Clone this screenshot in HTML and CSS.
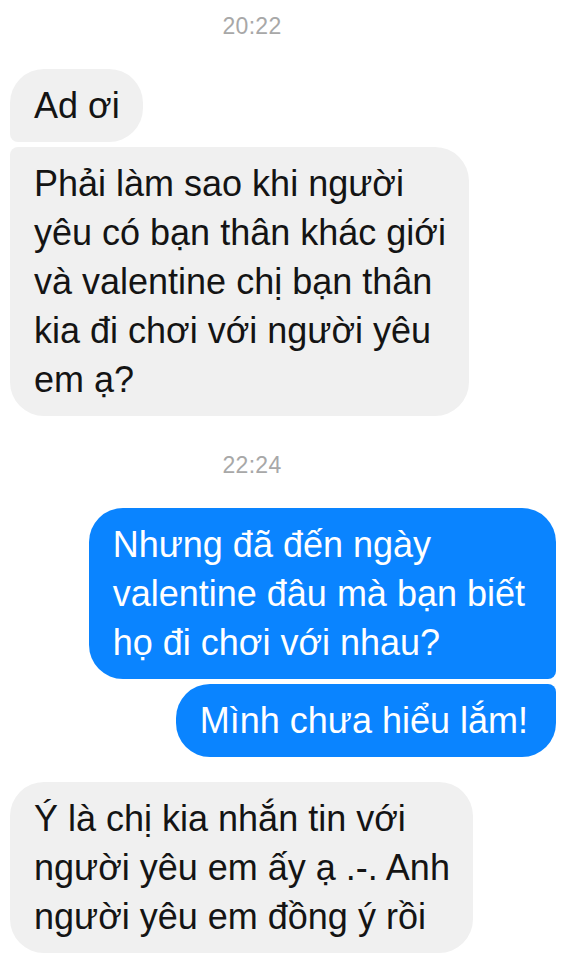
FILE: index.html
```html
<!DOCTYPE html>
<html lang="vi">
<head>
<meta charset="utf-8">
<title>Chat</title>
<link rel="stylesheet" href="styles.css">
</head>
<body>
<div class="chat">
  <div class="time">20:22</div>
  <div class="group in">
    <div class="bubble first">Ad ơi</div>
    <div class="bubble last">Phải làm sao khi người<br>yêu có bạn thân khác giới<br>và valentine chị bạn thân<br>kia đi chơi với người yêu<br>em ạ?</div>
  </div>
  <div class="time time-2">22:24</div>
  <div class="group out">
    <div class="bubble first">Nhưng đã đến ngày<br>valentine đâu mà bạn biết<br>họ đi chơi với nhau?</div>
    <div class="bubble last">Mình chưa hiểu lắm!</div>
  </div>
  <div class="group in group-3">
    <div class="bubble single">Ý là chị kia nhắn tin với<br>người yêu em ấy ạ .-. Anh<br>người yêu em đồng ý rồi</div>
  </div>
</div>
</body>
</html>
```

FILE: styles.css
```css
html, body {
  margin: 0;
  padding: 0;
  background: #ffffff;
}

body {
  font-family: "Liberation Sans", Arial, sans-serif;
  width: 562px;
  height: 960px;
  overflow: hidden;
}

.chat {
  display: flex;
  flex-direction: column;
  padding: 13px 6px 0 10px;
}

.time {
  width: 484px;
  text-align: center;
  font-size: 23px;
  line-height: 26px;
  color: #a8a8a8;
  letter-spacing: 0.3px;
  margin-bottom: 30px;
}

.time-2 {
  margin-top: 36px;
}

.group {
  display: flex;
  flex-direction: column;
  gap: 5px;
}

.group.in {
  align-items: flex-start;
}

.group.out {
  align-items: flex-end;
}

.group-3 {
  margin-top: 25px;
}

.bubble {
  font-size: 36px;
  line-height: 49px;
  padding: 12px 23px 12px 24px;
  border-radius: 34px;
  white-space: nowrap;
}

.in .bubble {
  background: #f0f0f0;
  color: #141414;
}

.out .bubble {
  background: #0a84ff;
  color: #ffffff;
  padding: 12px 28px 12px 24px;
}

.out .first {
  padding-right: 31px;
}

.in .first {
  border-radius: 34px 34px 34px 8px;
}

.in .last {
  border-radius: 8px 34px 34px 34px;
}

.out .first {
  border-radius: 34px 34px 8px 34px;
}

.out .last {
  border-radius: 34px 8px 34px 34px;
}
```
